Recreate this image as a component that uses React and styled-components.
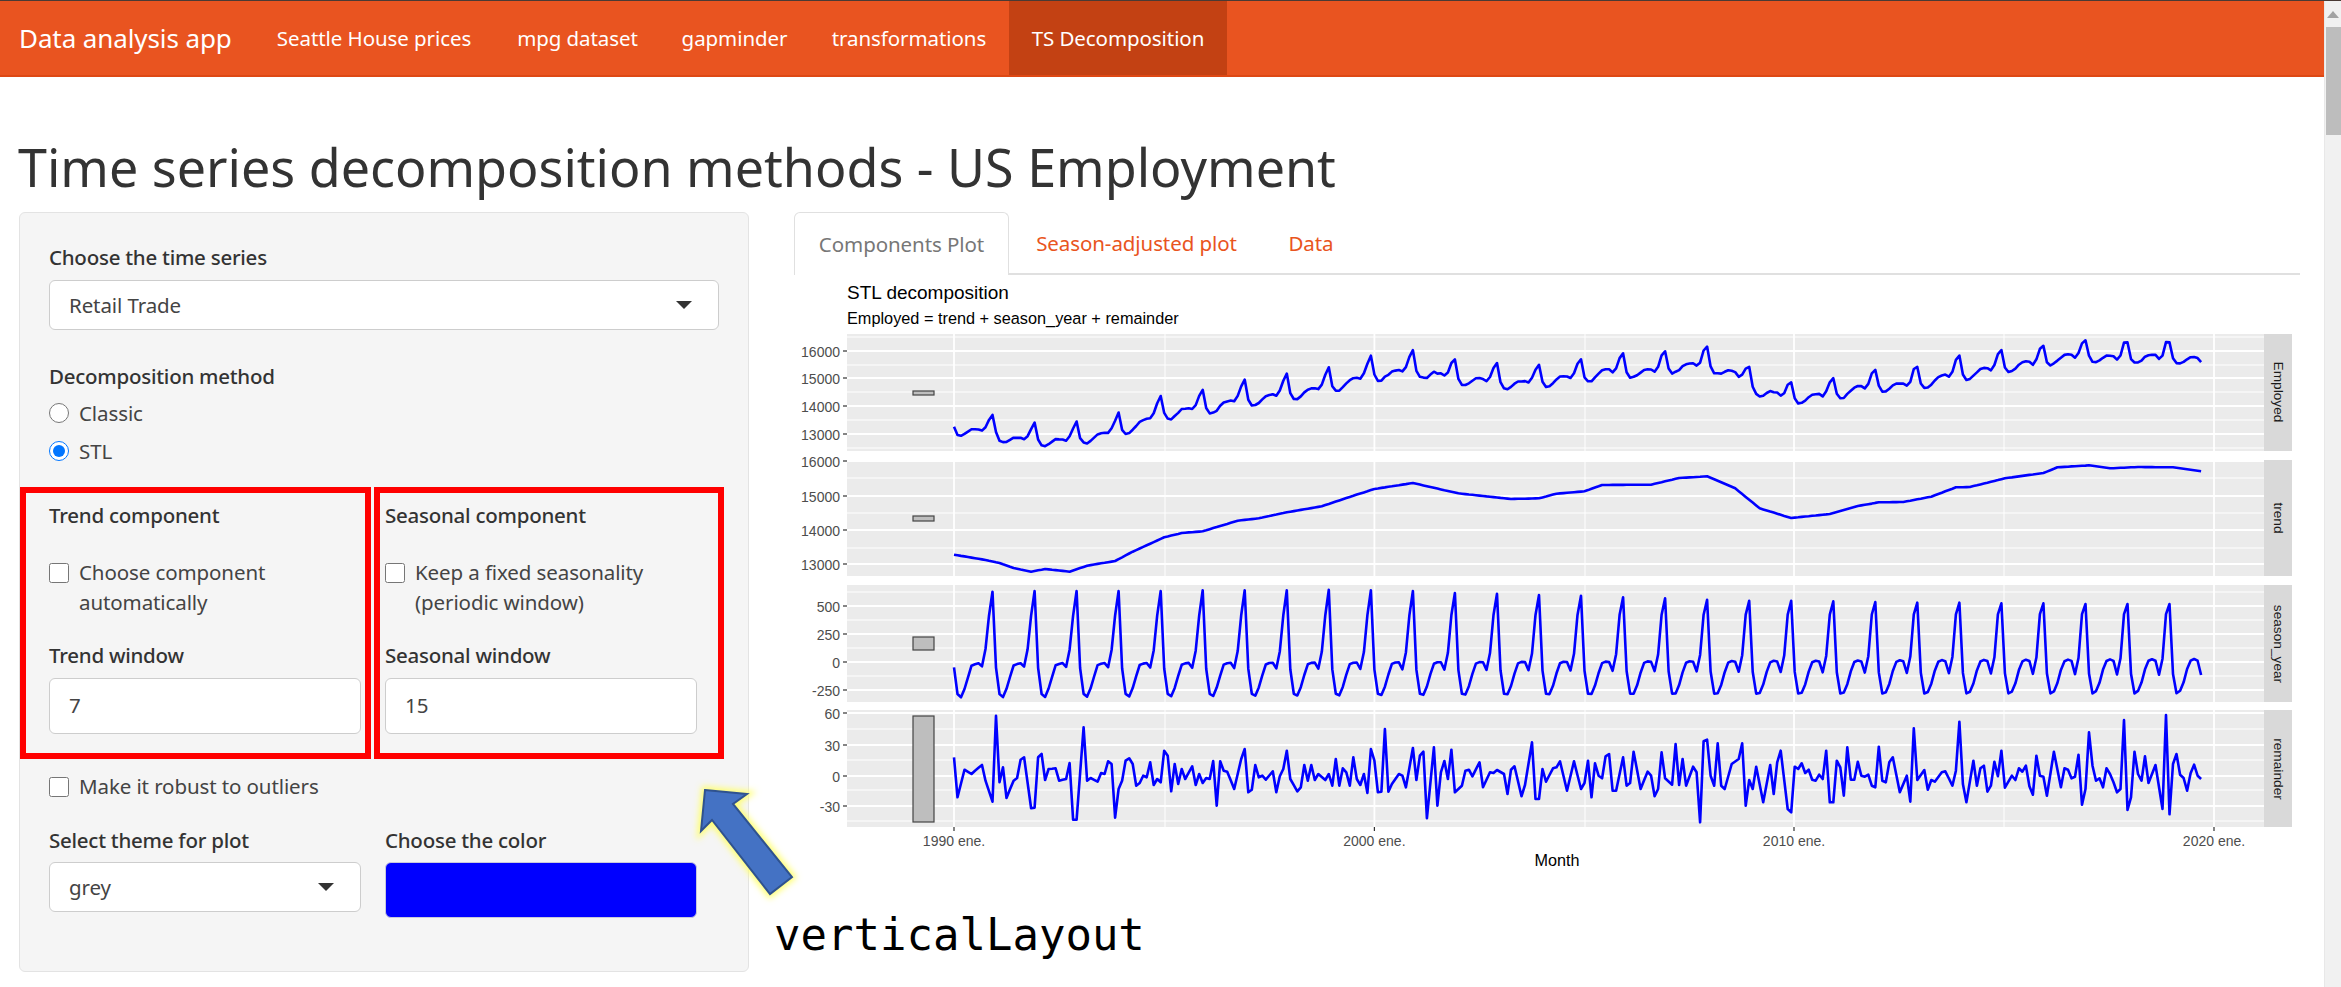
import React from "react";
import styled, { createGlobalStyle } from "styled-components";

const UI_FONT = '"Noto Sans", Roboto, sans-serif';
const PLOT_FONT = '"Liberation Sans", Arial, sans-serif';

const GlobalStyle = createGlobalStyle`
  html, body {
    margin: 0;
    height: 100%;
    overflow: hidden;
    background: white;
  }
  * { box-sizing: border-box; }
`;

const Page = styled.div`
  position: relative;
  display: flex;
  width: 2341px;
  height: 987px;
  border-top: 1px solid #4a3a34;
  overflow: hidden;
  font-family: ${UI_FONT};
  color: #333;
`;

const Content = styled.div`
  width: 2324px;
`;

const ScrollTrack = styled.div`
  width: 17px;
  background: #f1f1f1;
  padding-top: 26px;
  position: relative;
  border-left: 1px solid #e8e8e8;
`;

const ScrollArrow = styled.div`
  position: absolute;
  top: 10px;
  left: 2px;
  border-left: 6px solid transparent;
  border-right: 6px solid transparent;
  border-bottom: 7px solid #a3a3a3;
`;

const ScrollThumb = styled.div`
  height: 108px;
  margin-left: 1px;
  background: #bdbdbd;
`;

const Nav = styled.nav`
  display: flex;
  height: 76px;
  background: #e95420;
  border-bottom: 2px solid #dd4814;
`;

const Brand = styled.div`
  width: 253px;
  padding-left: 19px;
  line-height: 74px;
  font-size: 26px;
  color: white;
  letter-spacing: -0.1px;
`;

const NavLink = styled.a`
  width: ${(p) => p.$w}px;
  text-align: center;
  line-height: 74px;
  font-size: 20.5px;
  color: white;
  letter-spacing: -0.08px;
  background: ${(p) => (p.$active ? "#c34113" : "transparent")};
`;

const Title = styled.h1`
  margin: 56px 0 12px 18px;
  font-size: 52px;
  line-height: 67px;
  font-weight: 400;
  color: #333;
  white-space: nowrap;
`;

const Columns = styled.div`
  display: flex;
  gap: 45px;
  padding-left: 19px;
`;

const Sidebar = styled.div`
  width: 730px;
  height: 760px;
  background: #f5f5f5;
  border: 1px solid #e3e3e3;
  border-radius: 6px;
`;

const Section = styled.div`
  padding-left: 29px;
  padding-top: ${(p) => p.$top || 0}px;
`;

const Label = styled.div`
  line-height: 30px;
  font-size: 20.5px;
  font-weight: 500;
  letter-spacing: -0.25px;
  white-space: nowrap;
  margin-top: ${(p) => p.$top || 0}px;
  margin-bottom: ${(p) => p.$bottom || 0}px;
`;

const SelectBox = styled.div`
  display: flex;
  align-items: center;
  justify-content: space-between;
  width: ${(p) => p.$w}px;
  height: 50px;
  padding: 0 26px 0 19px;
  background: white;
  border: 1.5px solid #cdcdcd;
  border-radius: 6px;
  font-size: 20.5px;
  letter-spacing: -0.1px;
  color: #444;
`;

const Caret = styled.span`
  border-left: 8px solid transparent;
  border-right: 8px solid transparent;
  border-top: 8px solid #333;
`;

const RadioRow = styled.label`
  display: flex;
  align-items: center;
  gap: 10px;
  height: 38px;
  font-size: 20.5px;
  letter-spacing: -0.1px;
  color: #444;
`;

const Radio = styled.input`
  width: 20px;
  height: 20px;
  margin: 0;
`;

const RedRow = styled.div`
  display: flex;
  gap: 3px;
  margin-top: 17px;
`;

const RedBox = styled.div`
  width: ${(p) => p.$w}px;
  height: 272px;
  border: 6px solid #ff0000;
  padding: 7px 0 0 ${(p) => p.$left}px;
`;

const CheckRow = styled.label`
  display: flex;
  align-items: flex-start;
  gap: 10px;
  margin-top: ${(p) => p.$top}px;
  font-size: 20.5px;
  line-height: 29.5px;
  letter-spacing: -0.1px;
  color: #444;
  min-height: ${(p) => p.$height}px;
`;

const Check = styled.input`
  flex: none;
  width: 20px;
  height: 20px;
  margin: 5px 0 0;
`;

const NumberBox = styled.div`
  width: 312px;
  height: 56px;
  padding-left: 19px;
  background: white;
  border: 1.5px solid #cdcdcd;
  border-radius: 6px;
  font-size: 20.5px;
  line-height: 53px;
  color: #444;
`;

const FieldGrid = styled.div`
  display: flex;
  gap: 24px;
  padding-left: 29px;
  margin-top: 23px;
`;

const Field = styled.div`
  width: 312px;
`;

const ColorBox = styled.div`
  height: 56px;
  background: #0000ff;
  border: 1px solid #c8c8dc;
  border-radius: 6px;
`;

const Main = styled.div`
  width: 1506px;
`;

const TabBar = styled.div`
  display: flex;
  height: 63px;
  border-bottom: 2px solid #e0e0e0;
`;

const Tab = styled.a`
  width: ${(p) => p.$w}px;
  height: 63px;
  text-align: center;
  line-height: 62px;
  font-size: 20.5px;
  letter-spacing: -0.08px;
  color: ${(p) => (p.$active ? "#777" : "#e95420")};
  background: ${(p) => (p.$active ? "white" : "transparent")};
  border: ${(p) => (p.$active ? "1.5px solid #e0e0e0" : "none")};
  border-bottom: none;
  border-radius: 6px 6px 0 0;
`;

const Chart = styled.svg`
  display: block;
  width: 1506px;
  height: 610px;
`;

const PlotText = styled.text`
  font-family: ${PLOT_FONT};
  font-size: ${(p) => p.$size}px;
  fill: ${(p) => p.$fill || "#4d4d4d"};
`;

const ArrowShape = styled.svg`
  position: absolute;
  left: 680px;
  top: 760px;
  width: 140px;
  height: 160px;
`;

const LayoutNote = styled.div`
  position: absolute;
  left: 774px;
  top: 906px;
  font-family: "DejaVu Sans Mono", monospace;
  font-size: 44px;
  line-height: 56px;
  color: black;
`;

// traced off the original plot, as [x, y] pairs in plot-local units
const TREND_LEFT = [341,1067,400,1083,430,1092,460,1107,495,1118,520,1110,570,1118,600,1100,655,1086,690,1058,750,1015,790,1002,830,997,900,965,940,958,990,940,1060,922,1110,897,1165,870,1240,852,1330,883,1430,900];
const TREND_RIGHT = [0,898,30,884,88,877,125,858,215,857,270,837,330,832,385,868,430,928,490,957,570,945,620,921,665,910,715,909,770,893,815,865,845,864,910,838,985,822,1015,805,1075,799,1115,808,1175,804,1240,805,1293,817];
const REM_LEFT = [341,535,349,655,362,572,372,585,385,575,396,558,405,605,417,668,423,410,431,610,437,565,445,657,455,605,463,597,470,605,474,542,479,535,493,688,498,686,506,535,513,525,519,603,527,570,540,568,550,605,558,600,567,552,575,722,581,722,596,445,602,605,610,597,622,608,632,582,638,585,645,547,650,555,658,716,664,630,671,605,677,545,684,538,691,555,698,620,705,612,715,590,720,595,726,550,733,618,738,600,746,610,754,515,760,530,767,637,773,555,780,615,788,570,795,600,808,562,815,618,822,585,829,612,836,597,843,600,851,546,856,680,863,547,871,575,878,578,891,630,905,540,911,510,917,640,924,632,931,558,938,595,945,590,955,602,966,577,973,640,980,592,987,570,993,515,1001,600,1014,637,1021,625,1028,558,1035,605,1042,558,1050,603,1055,585,1070,603,1076,585,1083,620,1090,540,1097,620,1104,568,1110,580,1117,620,1124,535,1131,600,1138,618,1145,585,1151,642,1158,510,1165,545,1172,640,1180,638,1187,450,1192,638,1200,615,1215,585,1222,590,1228,625,1241,507,1248,603,1255,530,1261,518,1268,718,1282,505,1289,680,1296,580,1303,546,1309,600,1316,512,1324,640,1337,620,1344,575,1350,572,1358,592,1370,550,1378,625,1392,580,1398,582,1405,573,1418,585,1426,645,1433,572,1440,562,1455,652,1461,618,1474,490,1482,660];
const REM_RIGHT = [0,660,6,570,12,608,25,568,33,565,39,547,53,635,67,547,80,630,87,612,95,545,102,655,109,553,116,590,122,598,129,532,136,525,143,635,150,635,163,535,170,620,177,612,184,518,197,630,211,578,218,590,225,652,232,630,239,520,246,598,257,617,266,495,273,618,280,540,288,620,301,563,308,580,314,730,322,487,328,482,335,590,342,620,348,493,355,620,362,630,376,555,389,540,396,493,404,680,410,603,417,630,424,563,438,670,451,558,458,645,465,550,472,515,486,690,492,700,499,563,506,570,513,553,520,582,526,572,534,602,540,605,547,587,554,600,561,515,568,670,574,670,581,545,588,565,595,650,603,505,609,602,616,602,622,548,629,590,636,593,642,587,650,620,657,625,664,503,671,605,678,610,685,550,691,535,705,640,718,590,725,668,732,448,739,603,753,573,759,632,767,603,774,608,787,580,795,577,808,620,815,575,822,428,829,615,836,670,849,545,856,620,863,568,870,560,877,638,884,620,891,548,897,592,903,515,911,626,925,590,932,603,938,568,945,578,952,560,959,622,966,647,973,530,980,590,987,593,994,650,1007,518,1021,625,1028,568,1035,572,1042,598,1048,593,1055,527,1062,677,1069,630,1077,460,1083,560,1090,605,1096,598,1104,625,1110,568,1117,585,1124,610,1131,640,1137,630,1144,423,1151,693,1158,655,1165,518,1172,585,1178,605,1185,532,1192,612,1205,558,1220,690,1226,408,1234,706,1241,555,1247,525,1254,587,1261,597,1268,635,1275,583,1282,557,1289,590,1295,600];
const SEASON_START = [265,345,355,330,295,260,256,253,262,210,110,38];
const SEASON_END = [285,343,335,310,270,245,240,245,288,240,105,75];
const DEC_PEAK = [38,36,36,36,36,34,34,34,32,34,36,42,44,48,50,55,58,62,65,65,67,69,71,71,73,73,75,75,75,75];

const MONTHS = 357;
const X0 = 954;
const DX = 3.503;
const monthX = (m) => X0 + m * DX;

// snap traced pairs to the nearest month (keeping the spikes), fill gaps linearly
function toMonthly(left, right, mid) {
  const slots = new Array(MONTHS).fill(null);
  const put = (px, y) => {
    const m = Math.min(MONTHS - 1, Math.max(0, Math.round((px - X0) / DX)));
    if (slots[m] === null || Math.abs(y - mid) > Math.abs(slots[m] - mid)) slots[m] = y;
  };
  for (let i = 0; i < left.length; i += 2) put(780 + left[i] / 1.96, left[i + 1]);
  for (let i = 0; i < right.length; i += 2) put(1540 + right[i] / 1.96, right[i + 1]);
  let last = 0;
  for (let m = 1; m < MONTHS; m++) {
    if (slots[m] === null) continue;
    for (let j = last + 1; j < m; j++) slots[j] = slots[last] + ((slots[m] - slots[last]) * (j - last)) / (m - last);
    last = m;
  }
  return slots;
}

const trendRaw = toMonthly(TREND_LEFT, TREND_RIGHT, 950);
const remRaw = toMonthly(REM_LEFT, REM_RIGHT, 590);
const seasonRaw = Array.from({ length: MONTHS }, (_, m) => {
  const year = Math.floor(m / 12);
  const month = m % 12;
  if (month === 11) return DEC_PEAK[year];
  const t = year / 29;
  return SEASON_START[month] + (SEASON_END[month] - SEASON_START[month]) * t;
});

// Employed = trend + season_year + remainder
const employedY = trendRaw.map((ty, m) => {
  const trend = 13000 + ((1096 - ty) / 103) * 1000;
  const season = ((248 - seasonRaw[m]) / 84.5) * 250;
  const rem = (590 - remRaw[m]) / 3.08;
  return 434.7 - ((trend + season + rem - 13000) / 1000) * 27.67;
});

const linePath = (ys) => ys.map((y, m) => `${m ? "L" : "M"}${monthX(m).toFixed(1)} ${y.toFixed(1)}`).join("");

const PANELS = [
  {
    name: "Employed", top: 335, bottom: 452, bar: [392, 396], labelY: 393,
    ticks: [[352, "16000"], [379, "15000"], [407, "14000"], [435, "13000"]],
    minor: [338, 366, 393, 421, 449],
    line: employedY,
  },
  {
    name: "trend", top: 461, bottom: 577, bar: [517, 522], labelY: 519,
    ticks: [[462, "16000"], [497, "15000"], [531, "14000"], [565, "13000"]],
    minor: [479, 514, 549],
    line: trendRaw.map((y) => 200 + y / 3),
  },
  {
    name: "season_year", top: 586, bottom: 703, bar: [638, 651], labelY: 645,
    ticks: [[607, "500"], [635, "250"], [663, "0"], [691, "-250"]],
    minor: [593, 621, 649, 677],
    line: seasonRaw.map((y) => 580 + y / 3),
  },
  {
    name: "remainder", top: 711, bottom: 828, bar: [717, 823], labelY: 770,
    ticks: [[714, "60"], [746, "30"], [777, "0"], [807, "-30"]],
    minor: [730, 761, 791, 822],
    line: remRaw.map((y) => 580 + y / 3),
  },
];

const YEAR_MAJOR = [[954, "1990 ene."], [1374.4, "2000 ene."], [1794, "2010 ene."], [2214, "2020 ene."]];
const YEAR_MINOR = [1165, 1585, 2004];

function DecompositionPlot() {
  return (
    <Chart viewBox="794 276 1506 610">
      <PlotText x="847" y="299.5" $size={19} $fill="black">STL decomposition</PlotText>
      <PlotText x="847" y="325" $size={16.3} $fill="black">Employed = trend + season_year + remainder</PlotText>
      {PANELS.map((p) => (
        <g key={p.name}>
          <rect x="847" y={p.top} width="1417" height={p.bottom - p.top} fill="#ebebeb" />
          <rect x="2264" y={p.top} width="28" height={p.bottom - p.top} fill="#d9d9d9" />
          {p.minor.map((y) => <line key={y} x1="847" x2="2264" y1={y} y2={y} stroke="white" strokeWidth="1" />)}
          {p.ticks.map(([y]) => <line key={y} x1="847" x2="2264" y1={y} y2={y} stroke="white" strokeWidth="1.8" />)}
          {YEAR_MINOR.map((x) => <line key={x} x1={x} x2={x} y1={p.top} y2={p.bottom} stroke="white" strokeWidth="1" />)}
          {YEAR_MAJOR.map(([x]) => <line key={x} x1={x} x2={x} y1={p.top} y2={p.bottom} stroke="white" strokeWidth="1.8" />)}
          {p.ticks.map(([y, label]) => (
            <g key={label}>
              <line x1="843" x2="847" y1={y} y2={y} stroke="#333" strokeWidth="1.2" />
              <PlotText x="840" y={y + 6} $size={14} textAnchor="end">{label}</PlotText>
            </g>
          ))}
          <rect x="913" y={p.bar[0]} width="21" height={p.bar[1] - p.bar[0]} fill="#bebebe" stroke="#444" strokeWidth="1.2" />
          <path d={linePath(p.line)} fill="none" stroke="#0000ff" strokeWidth="2.6" strokeLinejoin="round" />
          <PlotText
            x="2278"
            y={p.labelY}
            $size={13.7}
            $fill="#1a1a1a"
            textAnchor="middle"
            dominantBaseline="central"
            transform={`rotate(90 2278 ${p.labelY})`}
          >
            {p.name}
          </PlotText>
        </g>
      ))}
      {YEAR_MAJOR.map(([x, label]) => (
        <g key={label}>
          <line x1={x} x2={x} y1="828" y2="832" stroke="#333" strokeWidth="1.2" />
          <PlotText x={x} y="847" $size={14} textAnchor="middle">{label}</PlotText>
        </g>
      ))}
      <PlotText x="1557" y="867" $size={16.2} $fill="black" textAnchor="middle">Month</PlotText>
    </Chart>
  );
}

const ARROW = "25,29 67,33 53,43 112,116 90,133 32,59 21,70";

export default function App() {
  return (
    <>
      <GlobalStyle />
      <Page>
        <Content>
          <Nav>
            <Brand>Data analysis app</Brand>
            <NavLink $w={242}>Seattle House prices</NavLink>
            <NavLink $w={165}>mpg dataset</NavLink>
            <NavLink $w={149}>gapminder</NavLink>
            <NavLink $w={200}>transformations</NavLink>
            <NavLink $w={218} $active>TS Decomposition</NavLink>
          </Nav>
          <Title>Time series decomposition methods - US Employment</Title>
          <Columns>
            <Sidebar>
              <Section $top={29}>
                <Label $bottom={8}>Choose the time series</Label>
                <SelectBox $w={670}>Retail Trade<Caret /></SelectBox>
                <Label $top={31} $bottom={3}>Decomposition method</Label>
                <RadioRow><Radio type="radio" name="method" />Classic</RadioRow>
                <RadioRow><Radio type="radio" name="method" defaultChecked />STL</RadioRow>
              </Section>
              <RedRow>
                <RedBox $w={351} $left={23}>
                  <Label>Trend component</Label>
                  <CheckRow $top={28} $height={59}>
                    <Check type="checkbox" />
                    <span>Choose component<br />automatically</span>
                  </CheckRow>
                  <Label $top={23} $bottom={8}>Trend window</Label>
                  <NumberBox>7</NumberBox>
                </RedBox>
                <RedBox $w={350} $left={5}>
                  <Label>Seasonal component</Label>
                  <CheckRow $top={28} $height={59}>
                    <Check type="checkbox" />
                    <span>Keep a fixed seasonality<br />(periodic window)</span>
                  </CheckRow>
                  <Label $top={23} $bottom={8}>Seasonal window</Label>
                  <NumberBox>15</NumberBox>
                </RedBox>
              </RedRow>
              <Section $top={13}>
                <CheckRow $top={0} $height={30}>
                  <Check type="checkbox" />
                  <span>Make it robust to outliers</span>
                </CheckRow>
              </Section>
              <FieldGrid>
                <Field>
                  <Label $bottom={7}>Select theme for plot</Label>
                  <SelectBox $w={312}>grey<Caret /></SelectBox>
                </Field>
                <Field>
                  <Label $bottom={7}>Choose the color</Label>
                  <ColorBox />
                </Field>
              </FieldGrid>
            </Sidebar>
            <Main>
              <TabBar>
                <Tab $w={215} $active>Components Plot</Tab>
                <Tab $w={255}>Season-adjusted plot</Tab>
                <Tab $w={94}>Data</Tab>
              </TabBar>
              <DecompositionPlot />
            </Main>
          </Columns>
        </Content>
        <ScrollTrack>
          <ScrollArrow />
          <ScrollThumb />
        </ScrollTrack>
        <ArrowShape viewBox="0 0 140 160">
          <defs>
            <filter id="glow" x="-30%" y="-30%" width="160%" height="160%">
              <feGaussianBlur stdDeviation="3" />
            </filter>
          </defs>
          <polygon points={ARROW} fill="#ffff70" stroke="#ffff70" strokeWidth="7" filter="url(#glow)" />
          <polygon points={ARROW} fill="#4472c4" stroke="#2f528f" strokeWidth="2" />
        </ArrowShape>
        <LayoutNote>verticalLayout</LayoutNote>
      </Page>
    </>
  );
}
